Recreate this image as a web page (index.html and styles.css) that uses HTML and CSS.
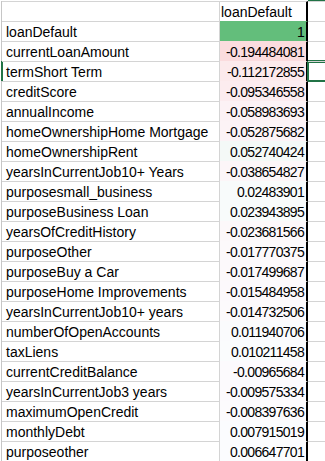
FILE: index.html
```html
<!DOCTYPE html>
<html lang="en">
<head>
<meta charset="utf-8">
<title>loanDefault correlations</title>
<link rel="stylesheet" href="styles.css">
</head>
<body>
<div class="sheet">
  <div class="cell name hdr"></div>
  <div class="cell val head">loanDefault</div>
  <div class="cell side top"></div>

  <div class="cell name">loanDefault</div>
  <div class="cell val fill" style="background:#63be7b">1</div>
  <div class="cell side"></div>

  <div class="cell name">currentLoanAmount</div>
  <div class="cell val fill" style="background:#fbdcde">-0.194484081</div>
  <div class="cell side"></div>

  <div class="cell name selrow">termShort Term</div>
  <div class="cell val fill" style="background:#fceaec">-0.112172855</div>
  <div class="cell side selected"></div>

  <div class="cell name">creditScore</div>
  <div class="cell val fill" style="background:#fcecef">-0.095346558</div>
  <div class="cell side"></div>

  <div class="cell name">annualIncome</div>
  <div class="cell val fill" style="background:#fcf2f5">-0.058983693</div>
  <div class="cell side"></div>

  <div class="cell name">homeOwnershipHome Mortgage</div>
  <div class="cell val fill" style="background:#fcf3f6">-0.052875682</div>
  <div class="cell side"></div>

  <div class="cell name">homeOwnershipRent</div>
  <div class="cell val fill" style="background:#f4f9f7">0.052740424</div>
  <div class="cell side"></div>

  <div class="cell name">yearsInCurrentJob10+ Years</div>
  <div class="cell val fill" style="background:#fcf6f8">-0.038654827</div>
  <div class="cell side"></div>

  <div class="cell name">purposesmall_business</div>
  <div class="cell val fill" style="background:#f8fbfb">0.02483901</div>
  <div class="cell side"></div>

  <div class="cell name">purposeBusiness Loan</div>
  <div class="cell val fill" style="background:#f8fbfb">0.023943895</div>
  <div class="cell side"></div>

  <div class="cell name">yearsOfCreditHistory</div>
  <div class="cell val fill" style="background:#fcf8fa">-0.023681566</div>
  <div class="cell side"></div>

  <div class="cell name">purposeOther</div>
  <div class="cell val fill" style="background:#fcf9fb">-0.017770375</div>
  <div class="cell side"></div>

  <div class="cell name">purposeBuy a Car</div>
  <div class="cell val fill" style="background:#fcf9fb">-0.017499687</div>
  <div class="cell side"></div>

  <div class="cell name">purposeHome Improvements</div>
  <div class="cell val fill" style="background:#fcf9fc">-0.015484958</div>
  <div class="cell side"></div>

  <div class="cell name">yearsInCurrentJob10+ years</div>
  <div class="cell val fill" style="background:#fcfafc">-0.014732506</div>
  <div class="cell side"></div>

  <div class="cell name">numberOfOpenAccounts</div>
  <div class="cell val fill" style="background:#fafbfd">0.011940706</div>
  <div class="cell side"></div>

  <div class="cell name">taxLiens</div>
  <div class="cell val fill" style="background:#fafcfd">0.010211458</div>
  <div class="cell side"></div>

  <div class="cell name">currentCreditBalance</div>
  <div class="cell val fill" style="background:#fcfafd">-0.00965684</div>
  <div class="cell side"></div>

  <div class="cell name">yearsInCurrentJob3 years</div>
  <div class="cell val fill" style="background:#fcfafd">-0.009575334</div>
  <div class="cell side"></div>

  <div class="cell name">maximumOpenCredit</div>
  <div class="cell val fill" style="background:#fcfbfd">-0.008397636</div>
  <div class="cell side"></div>

  <div class="cell name">monthlyDebt</div>
  <div class="cell val fill" style="background:#fbfcfe">0.007915019</div>
  <div class="cell side"></div>

  <div class="cell name">purposeother</div>
  <div class="cell val fill" style="background:#fbfcfe">0.006647701</div>
  <div class="cell side"></div>
</div>
</body>
</html>
```

FILE: styles.css
```css
html, body {
  margin: 0;
  padding: 0;
  background: #ffffff;
  overflow: hidden;
}

body {
  width: 325px;
  height: 461px;
  font-family: "Liberation Sans", Arial, sans-serif;
  font-size: 14px;
  color: #000000;
}

.sheet {
  display: grid;
  grid-template-columns: 218px 88px 1fr;
  grid-auto-rows: 20px;
  margin-top: 1px;
  margin-left: 1px;
  border-left: 1px solid #c6c6c6;
}

.cell {
  box-sizing: border-box;
  border-top: 1px solid #d4d4d4;
  padding-top: 2px;
  line-height: 17px;
  white-space: nowrap;
  overflow: hidden;
}

.name {
  border-right: 1px solid #d4d4d4;
  padding-left: 4px;
}

.selrow {
  box-shadow: -1px 0 0 #217346, inset 1px 0 0 #217346;
}

.val {
  border-right: 2px solid #000000;
  text-align: right;
  padding-right: 2px;
  letter-spacing: -0.7px;
}

.val.head {
  text-align: left;
  padding-left: 1px;
  letter-spacing: 0;
}

.val.fill {
  border-top-color: transparent;
}

.side.top {
  overflow: visible;
  box-shadow: 0 -1px 0 #217346;
}

.side.selected {
  position: relative;
  z-index: 1;
  overflow: visible;
  box-shadow:
    0 -1px 0 #217346,
    0 1px 0 #217346,
    -1px 0 0 #217346,
    inset 0 1px 0 #217346,
    inset 0 -1px 0 #217346,
    inset 1px 0 0 #217346;
}
```
